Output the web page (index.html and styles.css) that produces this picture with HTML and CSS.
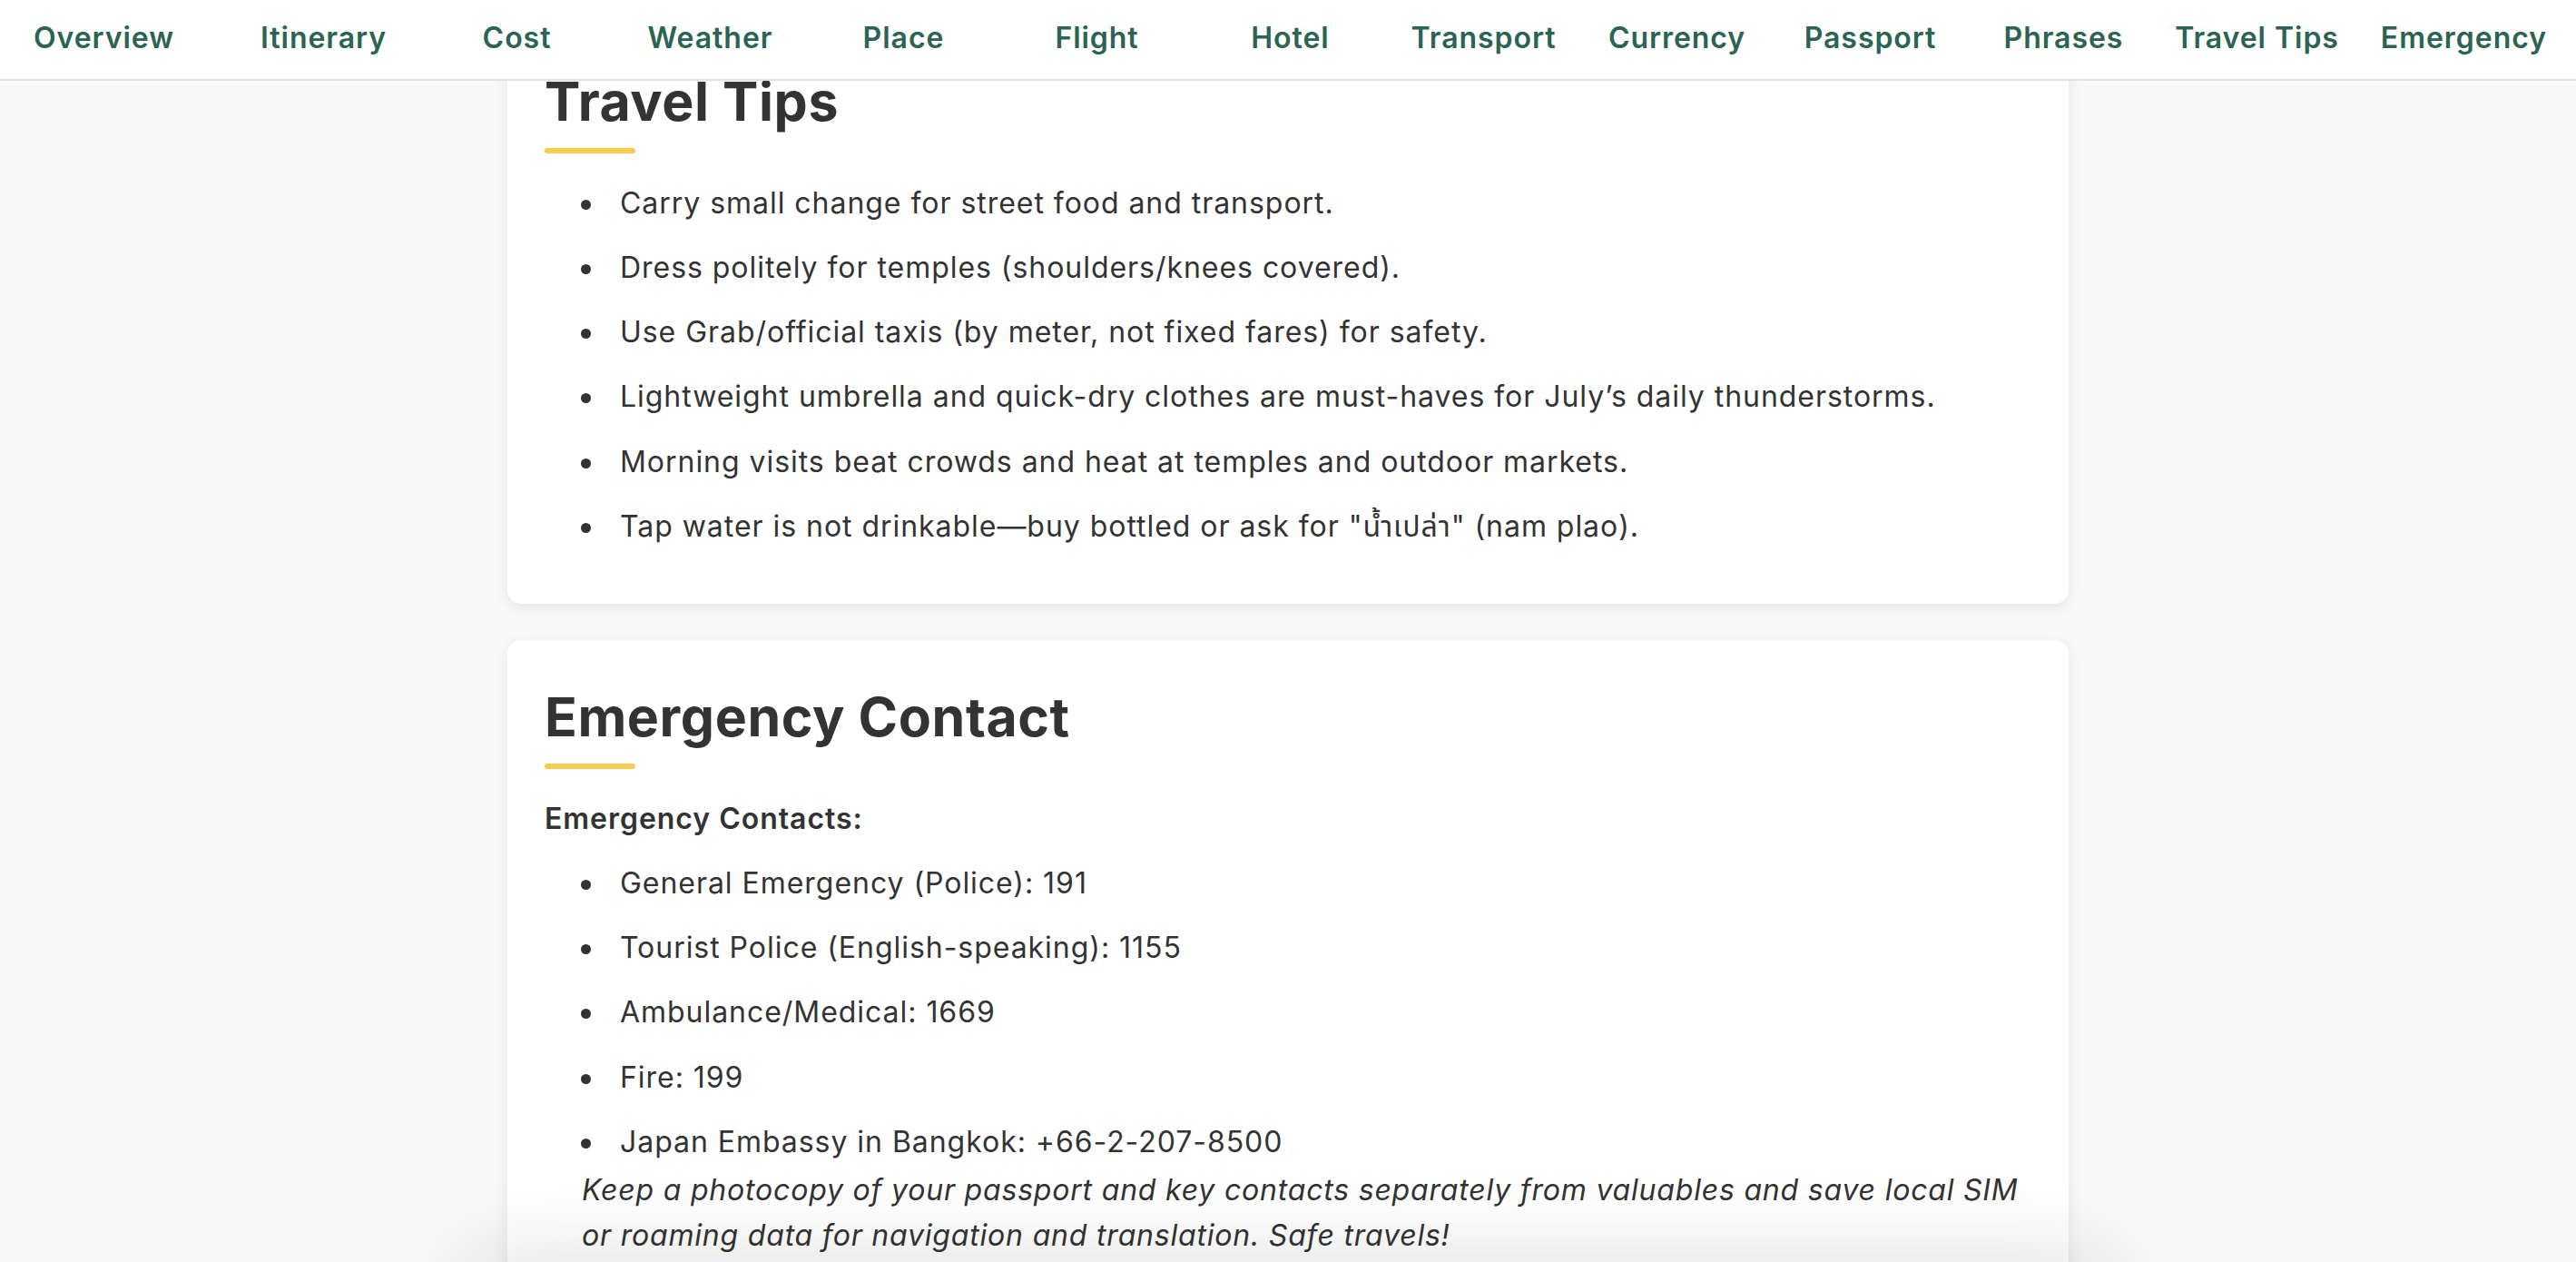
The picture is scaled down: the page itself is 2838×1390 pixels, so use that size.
FILE: index.html
```html
<!DOCTYPE html>
<html lang="en">
<head>
<meta charset="utf-8">
<title>Bangkok Trip Guide</title>
<link rel="stylesheet" href="styles.css">
</head>
<body>
<nav class="topnav">
  <a class="topnav-link first" href="#overview">Overview</a>
  <a class="topnav-link" href="#itinerary">Itinerary</a>
  <a class="topnav-link" href="#cost">Cost</a>
  <a class="topnav-link" href="#weather">Weather</a>
  <a class="topnav-link" href="#place">Place</a>
  <a class="topnav-link" href="#flight">Flight</a>
  <a class="topnav-link" href="#hotel">Hotel</a>
  <a class="topnav-link" href="#transport">Transport</a>
  <a class="topnav-link" href="#currency">Currency</a>
  <a class="topnav-link" href="#passport">Passport</a>
  <a class="topnav-link" href="#phrases">Phrases</a>
  <a class="topnav-link" href="#tips">Travel Tips</a>
  <a class="topnav-link last" href="#emergency">Emergency</a>
</nav>

<main class="page">
  <section class="card" id="tips">
    <h2 class="card-title">Travel Tips</h2>
    <ul class="bullets">
      <li>Carry small change for street food and transport.</li>
      <li>Dress politely for temples (shoulders/knees covered).</li>
      <li>Use Grab/official taxis (by meter, not fixed fares) for safety.</li>
      <li>Lightweight umbrella and quick-dry clothes are must-haves for July’s daily thunderstorms.</li>
      <li>Morning visits beat crowds and heat at temples and outdoor markets.</li>
      <li>Tap water is not drinkable—buy bottled or ask for "น้ำเปล่า" (nam plao).</li>
    </ul>
  </section>

  <section class="card" id="emergency">
    <h2 class="card-title">Emergency Contact</h2>
    <p class="card-label"><strong>Emergency Contacts:</strong></p>
    <ul class="bullets bullets-tight">
      <li>General Emergency (Police): 191</li>
      <li>Tourist Police (English-speaking): 1155</li>
      <li>Ambulance/Medical: 1669</li>
      <li>Fire: 199</li>
      <li>Japan Embassy in Bangkok: +66-2-207-8500</li>
    </ul>
    <p class="card-note"><em>Keep a photocopy of your passport and key contacts separately from valuables and save local SIM or roaming data for navigation and translation. Safe travels!</em></p>
  </section>
</main>

<div class="dock-shadow" aria-hidden="true"></div>
</body>
</html>
```
FILE: styles.css
```css
* { box-sizing: border-box; }

html, body {
  margin: 0;
  padding: 0;
}

body {
  background: #f8f8f8;
  color: #333333;
  font-family: Inter, "Noto Sans Thai", "Noto Sans", "DejaVu Sans", sans-serif;
  font-size: 32px;
  letter-spacing: 0.03em;
}

/* ---------- top navigation ---------- */
.topnav {
  position: fixed;
  top: 0;
  left: 0;
  right: 0;
  z-index: 10;
  height: 89px;
  padding: 23px 32px 0 37px;
  background: #ffffff;
  border-bottom: 2px solid #e1e1e1;
  display: grid;
  grid-template-columns: repeat(13, 1fr);
  align-items: start;
}

.topnav-link {
  display: block;
  font-size: 32px;
  font-weight: 600;
  line-height: 38.4px;
  letter-spacing: 0.03em;
  color: #2b6452;
  text-decoration: none;
  text-align: center;
  white-space: nowrap;
}

.topnav-link.first { text-align: left; }
.topnav-link.last { text-align: right; }

/* ---------- page ---------- */
.page {
  padding-top: 27px;
  display: flex;
  flex-direction: column;
  align-items: center;
  gap: 40px;
}

.card {
  width: 1720px;
  background: #ffffff;
  border-radius: 15px;
  box-shadow: 0 4px 16px rgba(0, 0, 0, 0.08);
  padding: 50px 41px 40px;
}

.card-title {
  margin: 0 0 29px;
  font-size: 59px;
  font-weight: 700;
  line-height: 70.8px;
  letter-spacing: 0.01em;
  color: #333333;
}

.card-title::after {
  content: "";
  display: block;
  width: 100px;
  height: 6px;
  margin-top: 15px;
  border-radius: 3px;
  background: #f8cc4d;
}

.card-label {
  margin: 0 0 20px;
  line-height: 51.2px;
}

.card-label strong { font-weight: 600; }

.bullets {
  list-style: none;
  margin: 0;
  padding: 0 0 0 40px;
}

.bullets li {
  position: relative;
  padding-left: 43px;
  margin-bottom: 20px;
  line-height: 51.2px;
}

.bullets li::before {
  content: "";
  position: absolute;
  left: 0;
  top: 22px;
  width: 11px;
  height: 11px;
  border-radius: 50%;
  background: #333333;
}

.bullets-tight li:last-child { margin-bottom: 0; }

.card-note {
  margin: 3px 0 0;
  padding-left: 41px;
  line-height: 50px;
  letter-spacing: 0.025em;
}

/* shadow cast by the docked bar just below the viewport */
.dock-shadow {
  position: fixed;
  left: 0;
  right: 0;
  bottom: -100px;
  height: 90px;
  width: 1800px;
  margin: 0 auto;
  background: #f8f8f8;
  box-shadow: 0 -10px 100px rgba(0, 0, 0, 0.15);
  z-index: 5;
}
```
